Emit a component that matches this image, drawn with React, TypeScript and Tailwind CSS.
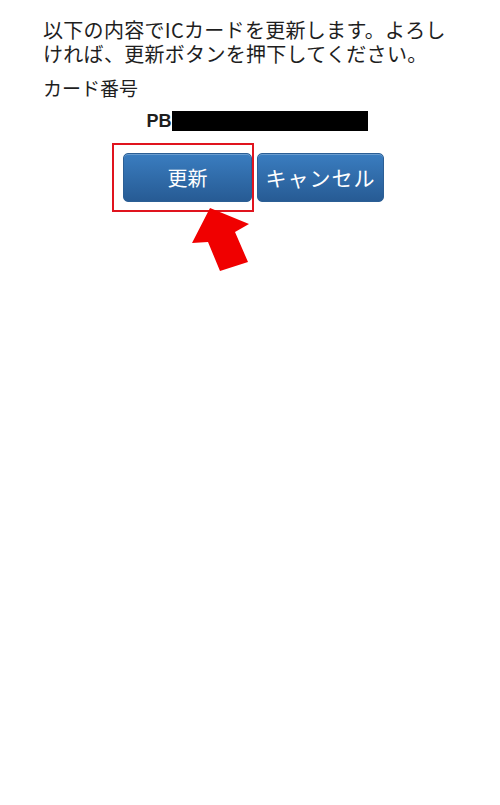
import React from "react";

export default function App() {
  return (
    <div
      className="relative w-[500px] h-[805px] bg-white text-[#1e1e1e]"
      style={{ fontFamily: '"Noto Sans CJK JP", "Noto Sans", sans-serif' }}
    >
      <div className="pl-[43px] pr-[30px] pt-[18px]">
        <p className="text-[20px] leading-[24px] font-normal tracking-[0.3px]">
          以下の内容でICカードを更新します。よろし
          <br />
          ければ、更新ボタンを押下してください。
        </p>
        <p className="mt-[10px] text-[19px] leading-[24px] font-normal">カード番号</p>
      </div>
      <div className="flex justify-center pl-[14px] mt-[9px]">
        <div className="flex items-center">
          <span
            className="text-[18px] font-bold leading-[24px]"
            style={{ fontFamily: '"Liberation Sans", Arial, sans-serif' }}
          >
            PB
          </span>
          <span className="block w-[196px] h-[20px] bg-black" />
        </div>
      </div>
      <div className="flex justify-center gap-[5px] pl-[7px] mt-[20px]">
        <div className="relative">
          <button className="w-[129px] h-[49px] rounded-[5px] border border-[#2c5f95] bg-gradient-to-b from-[#3a7dc0] to-[#275b94] text-white text-[20px] font-normal shadow-[inset_0_1px_0_rgba(255,255,255,0.25)]">
            更新
          </button>
          <div className="absolute left-[-11px] top-[-10px] w-[142px] h-[69px] border-2 border-[#e0141e] pointer-events-none" />
        </div>
        <button className="w-[127px] h-[49px] rounded-[5px] border border-[#2c5f95] bg-gradient-to-b from-[#3a7dc0] to-[#275b94] text-white text-[21px] font-normal tracking-[1px] shadow-[inset_0_1px_0_rgba(255,255,255,0.25)]">
          キャンセル
        </button>
      </div>
      <svg
        className="absolute left-0 top-0 pointer-events-none"
        width="500"
        height="805"
        viewBox="0 0 500 805"
      >
        <polygon
          points="210,208 249,224 235,232 248,262 220,271 208,242 192,243"
          fill="#f00000"
        />
      </svg>
    </div>
  );
}
